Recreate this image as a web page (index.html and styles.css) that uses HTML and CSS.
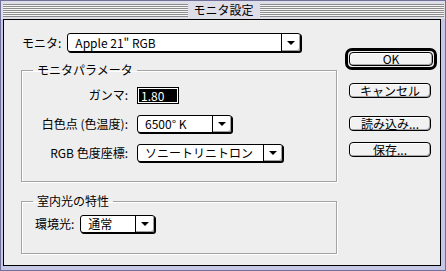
FILE: index.html
```html
<!DOCTYPE html>
<html lang="ja">
<head>
    <meta charset="UTF-8">
    <title>モニタ設定</title>
    <link rel="stylesheet" href="styles.css">
</head>
<body>
    <div class="window">
        <div class="titlebar">
            <span class="stripes"></span>
            <span class="title">モニタ設定</span>
            <span class="stripes"></span>
        </div>
        <div class="content">
            <div class="main">
                <div class="monitor-row">
                    <span class="label">モニタ:</span>
                    <div class="popup popup-monitor">
                        <span class="value">Apple 21" RGB</span>
                        <span class="arrow"></span>
                    </div>
                </div>

                <fieldset class="group group-params">
                    <legend>モニタパラメータ</legend>
                    <div class="form-grid">
                        <span class="label">ガンマ:</span>
                        <div class="field"><span class="sel">1.80</span></div>

                        <span class="label">白色点 (色温度):</span>
                        <div class="popup popup-white">
                            <span class="value">6500° K</span>
                            <span class="arrow"></span>
                        </div>

                        <span class="label">RGB 色度座標:</span>
                        <div class="popup popup-rgb">
                            <span class="value">ソニートリニトロン</span>
                            <span class="arrow"></span>
                        </div>
                    </div>
                </fieldset>

                <fieldset class="group group-ambient">
                    <legend>室内光の特性</legend>
                    <div class="ambient-row">
                        <span class="label">環境光:</span>
                        <div class="popup popup-ambient">
                            <span class="value">通常</span>
                            <span class="arrow"></span>
                        </div>
                    </div>
                </fieldset>
            </div>

            <div class="buttons">
                <div class="default-ring"><div class="btn">OK</div></div>
                <div class="btn btn-cancel">キャンセル</div>
                <div class="btn btn-load">読み込み...</div>
                <div class="btn btn-save">保存...</div>
            </div>
        </div>
    </div>
</body>
</html>
```

FILE: styles.css
```css
* {
    box-sizing: border-box;
}
body {
    margin: 0;
    background: #fff;
    font-family: "Noto Sans CJK JP", "Noto Sans", sans-serif;
    font-size: 12px;
    line-height: 14px;
    color: #000;
}
.window {
    width: 446px;
    height: 271px;
    display: flex;
    flex-direction: column;
    background: #c6c6e6;
    border: 1px solid #70709a;
    padding: 0 4px 4px 2px;
}
.titlebar {
    height: 18px;
    margin: 0 -4px 0 -2px;
    padding: 2px 1px 0 2px;
    display: flex;
    align-items: flex-start;
    background: #dedee8;
}
.titlebar .stripes {
    flex: 1;
    height: 13px;
    margin-top: 1px;
    background: repeating-linear-gradient(to bottom, #8c8c8c 0 1px, #f6f6f6 1px 2px);
}
.titlebar .title {
    padding: 0 6px;
    font-size: 12px;
    line-height: 14px;
}
.content {
    flex: 1;
    display: flex;
    background: #eeeeee;
    border: 1px solid #000;
    padding: 13px 0 0 17px;
}
.main {
    width: 316px;
}

/* popup menus */
.popup {
    display: flex;
    height: 18px;
    background: #fff;
    border: 1px solid #000;
    border-radius: 3px;
    box-shadow: 1px 1px 0 #000;
}
.popup .value {
    flex: 1;
    padding-left: 7px;
    line-height: 16px;
    white-space: nowrap;
}
.popup .arrow {
    width: 19px;
    border-left: 1px solid #000;
    border-radius: 0 2px 2px 0;
    box-shadow: inset -1px -1px 0 #a0a0a0;
    display: flex;
    align-items: center;
    justify-content: center;
}
.popup .arrow::after {
    content: "";
    border-left: 4px solid transparent;
    border-right: 4px solid transparent;
    border-top: 4px solid #000;
}

.monitor-row {
    display: flex;
    align-items: center;
    gap: 6px;
    padding-left: 1px;
}
.popup-monitor {
    width: 234px;
    height: 19px;
}
.popup-monitor .value {
    line-height: 17px;
}

/* group boxes */
.group {
    margin: 0;
    min-width: 0;
    width: 316px;
    border: 1px solid #a4a4a4;
    box-shadow: 1px 1px 0 #fff, inset 1px 1px 0 #fff;
}
.group legend {
    margin-left: 11px;
    padding: 0 4px;
    line-height: 14px;
}
.group-params {
    margin-top: 11px;
    padding: 9px 0 19px 0;
}
.form-grid {
    display: grid;
    grid-template-columns: 106px auto;
    column-gap: 9px;
    row-gap: 11px;
    grid-auto-rows: 18px;
    align-items: center;
    justify-items: start;
}
.form-grid .label {
    justify-self: end;
}
.field {
    width: 42px;
    height: 17px;
    border: 1px solid #000;
    background: #fff;
    padding: 1px;
}
.field .sel {
    display: block;
    height: 13px;
    background: #000;
    color: #fff;
    padding-left: 2px;
    line-height: 13px;
}
.popup-white {
    width: 95px;
}
.popup-rgb {
    width: 146px;
}

.group-ambient {
    margin-top: 12px;
    padding: 7px 0 20px 13px;
}
.group-ambient legend {
    margin-left: -2px;
}
.ambient-row {
    display: flex;
    align-items: center;
    gap: 6px;
}
.popup-ambient {
    width: 75px;
}

/* buttons */
.buttons {
    margin-left: 8px;
    padding-top: 15px;
    display: flex;
    flex-direction: column;
    align-items: flex-start;
}
.btn {
    width: 82px;
    height: 15px;
    border: 1px solid #000;
    border-radius: 4px;
    background: #f2f2f2;
    box-shadow: inset -1px -1px 0 #a8a8a8, inset 1px 1px 0 #fff;
    text-align: center;
    line-height: 13px;
    margin-left: 4px;
}
.default-ring {
    width: 92px;
    height: 22px;
    border: 3px solid #000;
    border-radius: 7px;
    padding: 1px;
}
.default-ring .btn {
    width: 100%;
    height: 14px;
    margin-left: 0;
    line-height: 12px;
}
.btn-cancel {
    margin-top: 13px;
}
.btn-load {
    margin-top: 18px;
}
.btn-save {
    margin-top: 11px;
}
```
